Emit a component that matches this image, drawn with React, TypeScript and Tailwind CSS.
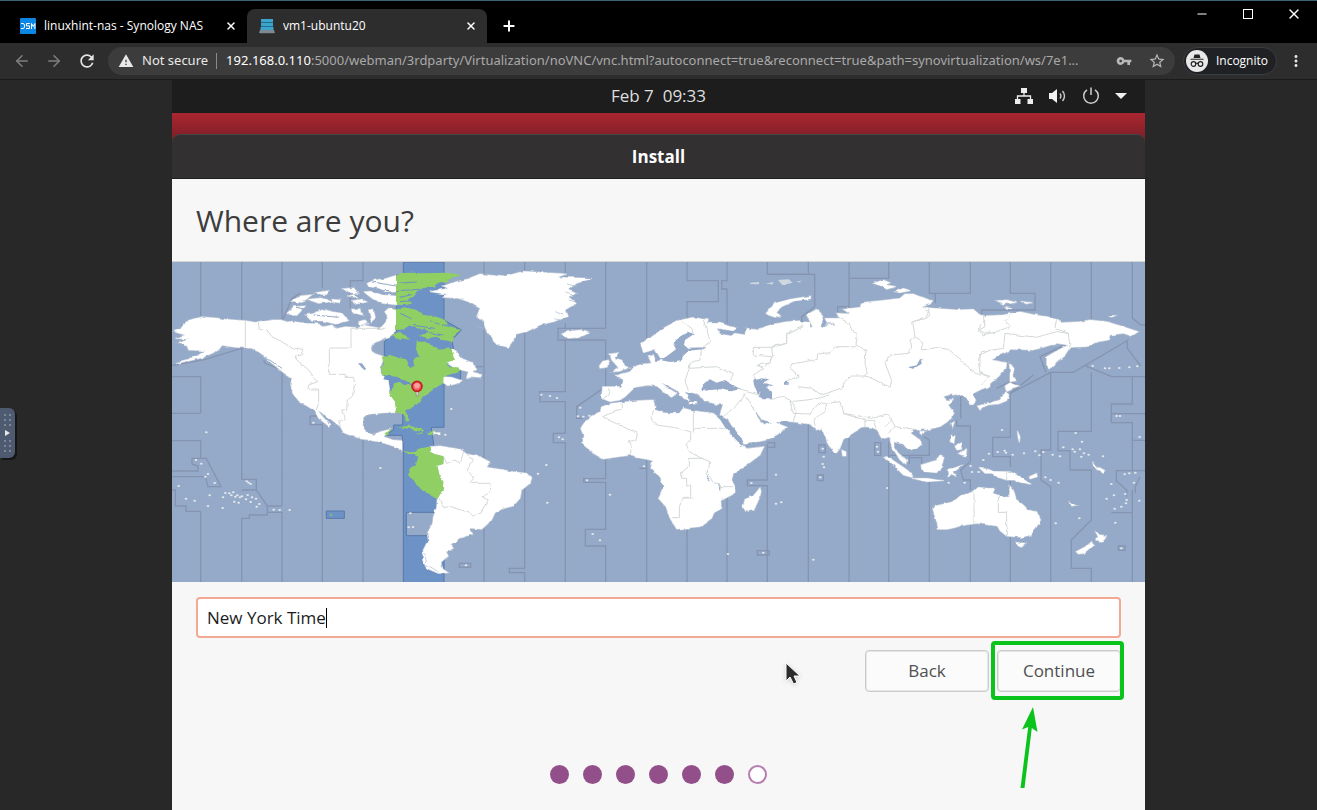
import type { ReactNode } from 'react';
import { ArrowLeft, ArrowRight, Plus, Minus, X } from 'lucide-react';
import { MdRefresh, MdWarning, MdVpnKey, MdStarBorder, MdMoreVert } from 'react-icons/md';

const uiFont = "font-['Open_Sans','Noto_Sans',sans-serif]";
const urlFont = "font-['Noto_Sans','Open_Sans',sans-serif]";

/* ---------- map data, drawn region by region ---------- */

const ZONE_LINES: [number, string][] = [
  [0, 'M86 6V185M86 350V460M86 542V595M86 755V968M0 350H86M0 460H86M0 542H86M0 633H78V618L60 612V595H103L147 680H108L100 650H0M0 690H10V738H42V754H86'],
  [0, 'M209 6V180M209 265V658H253V690L286 738H330M209 690H253M286 738V765H232V775H209V968M330 6V185L360 115L385 100M330 335V738M286 757H330V968M451 6V85M451 490V968M414 468H440M414 468V494H451M573 6V62H535V150M573 536V968'],
  [0, 'M0 317L100 298 215 263M275 300L280 310 355 340'],
  [624, 'M312 6V42M312 320H285M312 205V968M434 6V34M434 215V925H388V938H434V968M556 6V40M556 190V205H534V240H677M556 205H677V6M677 240V380M556 240V395H480V425H556V520H520V548H556V968M677 380L590 440V475H610M677 595V656H611V667H677V808H616V858H677V968M238 910H272V922H238Z'],
  [1164, 'M260 6V240M260 600V625H238M260 625V968M381 6V62H475V125H381V172M381 807V968M501 6V62H485V87H501V190M501 715V968M622 6V43H750M622 552V660H562V677H622V968M592 872H628V885H592ZM622 548H644V562H622'],
  [1704, 'M205 6V43M82 43H224V140L185 170V190M205 490V968M327 6V150M327 55H446V6M327 530V968M404 548H422V586H404ZM236 555H256V578H236ZM232 645H250V662H232ZM446 545V968M436 682H446M568 6V100H691V6M586 100V130M552 530L568 540V586H450M568 665V968M508 586V612M508 593H545V610M293 160V140H327M691 790V968'],
  [2214, 'M181 605V498H140V480M152 400V475M181 605L152 630 160 660H181V690M301 6V100H375V150H215V170M301 830V968M301 680V655M301 620V590H248V532H301V400L422 337M301 400L370 345M422 6V168M422 337V570H393V660L422 680V968M408 337L390 290 475 250M422 337H490L655 240M544 6V180M544 337V514H444V572H480V630H544V780L484 840V925H544V968'],
  [2214, 'M667 6V175L694 195H706M667 350V432H604V488H667V632H619V663L650 690V710M604 461H706M667 541H706M667 632H706M604 758H667V968M667 690V758M652 240V265L692 318M525 317L605 350H706M690 650L676 680V700M260 385L300 365 328 378M625 858H645V871H625Z'],
];

const LAND: [number, string][] = [
  // North America
  [0, 'M5 215L30 205 42 186 60 178 92 170 130 174 160 178 220 182 258 188 300 180 328 180 345 186 360 184 400 190 440 192 455 200 480 195 492 206 520 200 560 203 575 196 600 200 625 205 640 188 655 165 673 150V213L650 232 635 238 610 247 597 262 600 275 612 282 637 290 625 322 627 345 648 356 655 400 672 425 673 458 640 458 590 463 574 475 572 500 585 520 605 524 625 515 655 508 635 530 662 540 690 542 690 574 670 560 620 545 572 537 540 528 515 518 505 500 480 480 445 455 438 452 450 468 474 494 470 498 440 475 428 452 400 435 385 428 362 400 356 370 360 355 335 338 300 310 262 278 240 265 190 262 150 256 140 270 120 280 90 293 50 303 12 311 40 300 75 288 100 272 50 270 45 258 20 250 50 238 10 235 40 225Z'],
  [0, 'M345 160L365 140 400 138 390 150 375 166 350 166Z M358 124L385 108 420 104 400 120 375 130Z M405 118L450 114 480 125 440 130Z M430 98L470 92 460 104 440 102Z M400 165L430 160 450 146 480 155 510 160 530 182 490 192 450 182 420 184Z M515 86L545 84 560 100 535 98Z M480 118L505 120 500 128 482 126Z M540 122L570 118 585 126 555 132Z M535 148L560 146 575 165 545 160Z M585 70L610 60 640 56 673 46V92L640 95 620 84 590 80Z M575 95L600 94 630 105 673 108V134L630 130 600 115Z M590 150L605 148 610 175 598 185Z M560 185L580 180 590 192 565 195Z M638 155L650 145 673 150V185L655 180Z M525 108L545 104 555 112Z'],
  // Greenland, Iceland, maritime Canada
  [624, 'M150 95L205 85 190 78 225 66 260 58 300 42 370 50 430 34 500 38 560 42 530 52 636 55 590 70 562 90 590 100 565 110 588 130 555 150 562 170 520 185 480 195 440 215 408 222 400 240 385 262 355 255 335 235 320 215 310 185 290 170 300 145 265 125 235 115 190 112 200 102Z M545 222L560 215 600 210 625 220 600 232 565 235Z M195 305L215 290 215 268 230 275 245 295 275 308 290 325 280 335 305 345 300 355 260 352 265 335 225 325Z M190 350L215 352 245 362 235 370 205 377 190 368Z'],
  // South America
  [624, 'M150 560L180 558 240 568 260 582 300 590 330 606 320 622 360 628 400 635 440 640 455 655 450 670 425 690 420 715 400 738 370 745 345 758 335 780 305 808 270 804 278 822 250 832 235 835 230 845 215 850 218 868 198 875 205 888 190 900 180 910 185 925 205 938 175 940 140 925 128 900 130 870 145 840 142 820 158 790 160 770 170 745 172 715 188 690 190 665 178 645 172 615 190 612 190 588 165 583 150 575Z M160 518L180 518 180 524 162 524Z'],
  // Africa and Madagascar
  [1164, 'M62 505L75 485 95 468 120 455 125 440 155 430 230 422 280 420 285 440 280 448 310 458 330 460 358 460 370 445 400 452 460 460 475 472 495 500 520 530 550 555 560 566 612 560 600 585 560 615 520 640 515 660 525 680 525 700 482 722 485 745 462 758 455 775 420 800 350 807 330 775 318 740 295 715 310 680 300 650 272 625 278 602 260 598 245 595 215 585 165 592 130 597 100 580 65 550 70 525Z M600 683L605 700 582 750 558 755 549 740 555 718 580 708Z'],
  // Europe and the Middle East
  [1164, 'M242 250L270 235 310 205 350 183 400 172 445 180 440 190 480 190 530 205 520 212 470 205 480 222 510 228 525 220 555 225 558 205 590 210 600 205 640 192 690 185 750 190V492L680 483 640 488 605 478 590 458 586 462 600 482 615 495 640 485 682 502 650 525 620 540 555 553 530 520 505 480 480 465 490 430 460 430 430 422 415 402 400 398 375 396 388 420 372 416 355 395 330 380 302 366 320 382 350 400 335 412 290 378 262 376 225 382 195 410 180 420 150 425 125 415 128 380 185 380 190 360 165 348 210 335 225 318 250 312 275 310 265 290 280 284 288 305 305 300 285 268 250 278Z M150 282L175 278 165 295 185 300 195 318 210 322 178 334 155 335 175 322 155 300Z M118 318L128 304 145 300 150 312 140 322 120 325Z M310 396L332 396 330 408Z M388 427H410V432H388Z M458 428L476 424 470 433Z'],
  // Asia
  [1704, 'M110 195L140 185 180 182 205 205 218 200 200 165 230 148 248 165 245 205 258 200 265 188 290 200 280 188 260 185 255 175 300 175 290 160 330 162 310 148 360 142 365 128 440 120 480 115 495 102 520 102 545 112 578 122 572 132 545 140 580 145 650 150 700 148 720 165 750 170V380L730 385 700 400 705 425 690 432 680 410 668 402 640 408 635 400 610 410 620 420 640 418 625 435 642 460 630 480 600 500 565 508 545 505 540 514 525 506 512 520 540 540 545 555 515 572 500 565 490 552 470 548 462 545 462 560 475 580 500 600 498 612 480 600 468 580 455 560 448 530 425 538 412 510 395 502 370 500 345 515 310 538 300 565 290 578 280 575 262 545 245 505 230 510 205 488 160 485 110 483Z M78 160L105 130 150 118 212 108 212 116 160 124 125 140 108 156 122 168 105 172 85 165Z M400 70L430 60 450 68 440 74 468 80 440 88 425 78Z M465 95L490 85 512 92 480 98Z M305 570L318 575 318 588 308 588Z'],
  [1704, 'M430 592L450 595 490 622 515 640 515 652 490 645 460 615Z M515 655L560 655 610 662 560 665Z M543 615L575 605 600 588 612 592 605 620 590 638 555 635 545 628Z M622 628L640 625 668 615 650 630 640 635 652 650 634 642 625 652Z M632 525L645 528 642 550 630 545Z M655 580L680 570 678 588 665 585Z M635 490L643 485 638 502Z M538 515L555 512 548 524Z M645 555L665 545 668 568 650 570Z'],
  // Far East
  [2214, 'M60 145L130 150 190 150 200 165 220 168 280 165 330 155 375 165 440 175 455 188 510 185 540 180 590 185 640 200 685 215 665 228 640 220 600 225 595 240 560 246 530 260 480 262 465 285 440 305 420 328 410 310 410 290 445 270 475 255 440 250 400 262 370 270 310 268 270 285 245 300 290 308 288 325 265 350 235 375 205 385 170 400 100 400 60 400Z M162 402L185 400 197 420 192 432 180 434 172 412Z M298 308L312 325 308 350 318 362 300 365 300 340Z M285 378L300 368 327 378 305 385 290 392Z M288 395L297 405 290 422 265 432 230 435 210 450 202 438 240 430 270 420Z'],
  [2214, 'M210 625L235 628 250 634 300 635 320 645 340 658 364 673 335 668 310 660 290 660 265 652 245 640 225 640Z M358 650L380 640 382 650 362 656Z M260 122L290 120 320 128 280 132Z M332 124L368 128 350 132Z M285 142L308 146 290 148Z M595 168L622 166 605 171Z M322 512L330 530 328 548 324 530Z M548 605L560 620 584 632 580 638 560 628 550 615Z M478 726L500 736 485 738Z'],
  // Oceania
  [2214, 'M68 745L75 738 130 725 150 708 190 695 205 682 235 685 255 685 248 700 285 712 298 710 300 678 310 690 318 718 340 735 355 750 380 755 392 780 380 800 362 825 335 832 290 828 270 812 262 798 240 795 200 790 150 798 115 808 85 808 80 785Z M318 847L348 850 335 862 325 858Z M553 810L568 824 592 828 577 845 560 840 565 830Z M498 875L530 858 545 845 556 853 525 880 505 882Z'],
];

const SEAS: [number, string][] = [
  [0, 'M558 310L570 310 582 326 580 333 568 322Z'],
  [1164, 'M300 300L318 290 348 268 338 248 355 235 385 216 402 222 375 240 372 255 382 263 440 262 430 268 385 272 370 288 366 300 330 306Z'],
  [1164, 'M422 394L430 375 450 358 470 368 495 360 515 372 542 388 510 394 480 388 450 390Z'],
  [1164, 'M580 362L605 355 628 358 608 368 640 376 618 382 636 395 636 418 605 418 592 400 582 378Z'],
  [1164, 'M476 470L486 466 515 505 545 535 552 553 545 558 520 530 495 502Z'],
  [1164, 'M435 638L450 665 442 660ZM474 670L482 675 480 694Z'],
  [1704, 'M502 322L530 316 540 298 548 296 544 312 520 326ZM132 366H146V374H132Z'],
];

const BORDERS: [number, string][] = [
  [0, 'M220 182V262M258 188L262 205 285 210 300 230 320 240 350 258 360 265H392V285L370 288 375 300 410 330 425 350 437 365 410 375 408 387H440V430L433 450M641 205H537V264H472V343H520V352H545L548 370 542 405 526 420 524 448 512 450 520 478 512 484 500 482 505 500'],
  [624, 'M190 588L200 610 225 600 240 610 252 572M260 582L280 600 262 630 280 655 270 670H330L328 695 308 712 325 720 300 760 280 768 265 755 240 750 215 740 190 742 178 715'],
  [1164, 'M185 430L188 445 128 470 150 482 232 520 228 540 205 545 215 562 210 585M280 448L275 480 290 495 340 502 392 515V540L378 550 388 575 425 595M400 515V505H495M400 452V505M425 595H385V620L362 640V655H380V675H392V712H370L358 740V773H335M425 595L450 605 440 640 460 668 480 672V680H520M400 714H370'],
  [1164, 'M365 183L395 205 400 225M430 180L442 215 450 245 425 265 420 300 390 308 388 325 470 320 520 340 512 362M388 325L375 362 385 392M540 390L598 405 600 395M550 400L570 430 585 455M555 400L530 435 490 470M128 420L145 400 148 385M730 195L680 220V250L635 262H580V285L635 290 630 310 590 315 610 325 580 345 590 360M635 262L638 290 615 320M636 418L665 410 690 420 710 450 700 485'],
  [1704, 'M190 200L140 225V250L95 260M300 175L328 190 335 210 352 225 348 255 378 270 375 310 382 340 372 348 385 350 450 382 455 362 435 308 450 285 505 280 515 262 510 240 525 230 518 185 560 175 570 165 555 140M525 230L548 245V270L590 262 625 268 640 280 670 305 690 330 720 345M348 260H285L270 278 232 282V298L155 312 150 325 178 348 135 365M372 348H330L310 370V382L245 405 215 385 175 380M150 425L200 420 235 415 265 405M150 425L160 460 210 462 240 425 265 430M225 500L222 478 255 455 260 430 300 425 308 460 375 480V502M308 460L370 470 395 475 440 462 455 480 435 500M375 480L400 482 408 505M455 480L465 500 445 520M465 500L525 508M718 340L745 350M750 215L735 220 715 208 735 180M720 320V285L750 270'],
  [2214, 'M60 145L50 170 10 185M220 168L225 200 205 210 220 225 260 215 300 200 285 185 300 165M285 220L380 232 440 215 475 220 435 205 440 175M285 220L280 265 215 275 205 300 210 340 240 348 215 375M475 220L480 260M192 695V790M265 705V757H290V828M290 632V660'],
];

// [x, y] of atolls and islets, in map units
const ISLETS: [number, number][] = [
  [72, 600], [88, 611], [103, 517], [108, 642], [100, 650], [128, 669], [20, 678], [42, 716], [68, 722], [113, 706],
  [108, 738], [152, 744], [153, 712], [160, 699], [172, 700], [178, 706], [184, 697], [190, 710], [196, 706], [204, 712],
  [210, 709], [222, 718], [227, 705], [236, 726], [240, 712], [252, 716], [262, 732], [254, 740], [200, 728], [187, 725],
  [224, 664], [230, 668], [236, 672], [305, 749], [323, 750], [353, 750], [625, 624], [424, 488], [715, 760], [710, 802], [723, 801],
  [838, 447], [1108, 404], [1134, 408], [1155, 414], [1225, 443], [1218, 469], [1234, 470], [1252, 467], [1161, 532], [1172, 538],
  [1098, 641], [1123, 615], [1245, 661], [1314, 704], [1126, 728], [1262, 822], [1284, 841], [882, 916], [1416, 619], [820, 524],
  [1812, 644], [1738, 669], [1812, 731], [1828, 727], [1668, 882], [1774, 878], [1924, 899], [1945, 652], [1952, 566],
  [1955, 590], [1952, 612], [1956, 622], [2115, 560], [2118, 575], [2145, 684], [2490, 510], [2451, 581], [2477, 576],
  [2498, 572], [2502, 578], [2522, 584], [2556, 580], [2590, 574],
  [2602, 586], [2614, 576], [2642, 584], [2664, 589], [2674, 562], [2702, 568], [2711, 519], [2730, 545], [2708, 575],
  [2724, 568], [2728, 590], [2736, 580], [2750, 584], [2793, 589], [2651, 790], [2722, 775], [2799, 325], [2812, 325], [2842, 324],
  [2872, 322], [2896, 319], [2834, 468], [2844, 468], [2903, 531], [2818, 672], [2804, 716], [2826, 706], [2860, 702], [2864, 720],
  [2862, 730], [2848, 740], [2828, 746], [2902, 722], [2858, 643], [2872, 640], [2890, 638], [2886, 668], [2830, 788], [2848, 865],
  [2620, 652], [2636, 660], [2660, 668], [2762, 318], [2434, 600], [2396, 618], [2400, 636], [2420, 636], [2330, 668], [2378, 668],
];

const HIGHLIGHT =
  'M694 6H816V180L868 210 840 240 848 290 866 320V360L816 370V502H778L786 560H816V757H703V827H816V968H694V560L690 526H640L665 508V495H692V460L660 400 650 360H637V245L673 213V45H694ZM463 753H517V775H463Z';

const GREEN =
  'M48 50L60 40 90 38 130 40 200 38 243 44 215 56 200 64 175 68 160 80 130 84 110 96 96 112 82 118 97 130 80 135H48Z M48 148L75 142 110 150 130 165 165 168 195 180 200 195 243 210 225 222 218 245 190 240 170 230 140 235 118 226 150 218 135 208 110 205 85 195 75 208 48 210Z M35 225L60 215 75 228 92 234 60 240Z M5 290L30 285 60 295 80 298 90 325 102 318 100 300 118 290 108 270 110 245 140 245 160 258 180 272 205 262 215 270 225 300 200 308 205 322 235 322 242 335 215 342 190 352 190 370 165 385 145 400 128 410 122 425 100 440 78 452 82 470 90 482 80 485 68 460 48 458 45 425 30 405 38 365 60 360 40 350 5 345 5 320 12 315Z M52 502L90 497 132 510 128 516 90 506Z M148 515L160 514 158 525 140 520Z M106 520L125 520 125 525Z M14 520L35 508 20 528Z M68 572L90 577 105 576 120 565 150 560 150 575 165 583 192 588 190 612 172 618 180 650 190 665 188 690 172 718 150 705 125 690 100 660 82 645 90 625 108 612 115 590 105 582 85 582Z';

type LayerProps = { shapes: [number, string][]; className: string; fill?: string };

function Layer({ shapes, className, fill = 'currentColor' }: LayerProps) {
  return (
    <g className={className} fill={fill}>
      {shapes.map(([x, d]) => (
        <path key={d} d={d} transform={`translate(${x} 0)`} />
      ))}
    </g>
  );
}

function TimezoneMap() {
  return (
    <svg viewBox="0 6 2919 960" className="block h-auto w-full bg-[#95a9c8]" role="img" aria-label="Time zone map">
      <defs>
        <filter id="coast" x="0" y="0" width="100%" height="100%">
          <feTurbulence type="fractalNoise" baseFrequency="0.05" numOctaves="2" seed="4" result="noise" />
          <feDisplacementMap in="SourceGraphic" in2="noise" scale="9" xChannelSelector="R" yChannelSelector="G" />
        </filter>
      </defs>
      <path d={HIGHLIGHT} className="fill-[#6d92c6] stroke-[#5878a6]" strokeWidth="3" />
      <g strokeWidth="4">
        <Layer shapes={ZONE_LINES} className="stroke-[#8595b1]" fill="none" />
      </g>
      <g filter="url(#coast)">
        <rect x="0" y="6" width="2919" height="960" fill="none" />
        {/* coast outline goes below the fill, so regions join without a seam */}
        <g strokeWidth="4">
          <Layer shapes={LAND} className="stroke-[#c3ccd8]" fill="none" />
        </g>
        <Layer shapes={LAND} className="text-white" />
        <path d={GREEN} transform="translate(624 0)" className="fill-[#8fcf63]" />
        <path d="M15 348L50 350 90 368 97 376 70 374 60 365 42 370 38 392 30 385 35 362 10 358Z" transform="translate(624 0)" className="fill-[#6d92c6]" />
        <path d="M50 70L110 66M50 92L120 88M60 112L95 104M60 125L100 121M60 160L95 176M100 196L165 205M150 185L210 200M130 215L190 225" transform="translate(624 0)" className="stroke-[#6d92c6]" strokeWidth="3" fill="none" />
        <Layer shapes={SEAS} className="text-[#95a9c8]" />
        <path d="M600 66L672 78M596 88L650 92M372 142L420 150M425 165L500 172M255 275L330 325" className="stroke-[#95a9c8]" strokeWidth="3" fill="none" />
        {/* fjords */}
        <path
          d="M910 165L935 185M918 200L945 212M1180 95L1205 108M1190 120L1212 126M1150 155L1175 165M1185 72L1215 80M1146 176L1165 180M758 880L765 915 800 935"
          className="stroke-[#a9b8ce]"
          strokeWidth="2"
          fill="none"
        />
        <path d="M1732 68L1765 66 1760 73 1735 72ZM1782 70L1806 66 1800 74ZM1818 60L1850 58 1862 68 1830 74ZM1872 64L1890 62 1884 68Z" className="fill-[#cfd8df]" />
        <g strokeWidth="3">
          <Layer shapes={BORDERS} className="stroke-[#d3d9d7]" fill="none" />
        </g>
      </g>
      <g className="fill-[#e4e9ec]">
        {ISLETS.map(([x, y]) => (
          <ellipse key={`${x}-${y}`} cx={x} cy={y} rx="4" ry="3" />
        ))}
      </g>
      <circle cx="477" cy="765" r="4" className="fill-[#7fb97c]" />
      {/* location pin */}
      <path d="M731 390H740L738 408H733Z" className="fill-[#e6e0e0] stroke-[#8c7f86]" strokeWidth="2" />
      <circle cx="735" cy="379" r="15" className="fill-[#f06060] stroke-[#c22020]" strokeWidth="5" />
      <path d="M726 374Q735 364 744 374L741 385H729Z" className="fill-[#f9a0a0]" />
    </svg>
  );
}

/* ---------- browser chrome ---------- */

function DsmIcon() {
  return (
    <svg viewBox="0 0 16 16" className="size-4 shrink-0">
      <rect width="16" height="16" rx="1" fill="#0a86e4" />
      <path
        d="M1 5.500H3Q4.700 5.500 4.700 8T3 10.500H1M9.800 5.500H6.500V7.900H9.500V10.500H6M11.500 11V5.500L13.200 8.500L14.900 5.500V11"
        fill="none"
        stroke="#fff"
        strokeWidth="1"
      />
    </svg>
  );
}

function VmIcon() {
  return (
    <svg viewBox="0 0 16 16" className="size-4 shrink-0">
      <path d="M2 1H14V4H2ZM2 5H14V8H2ZM1.500 9H14.500V12H1.500Z" fill="#3da5cc" />
      <path d="M2 4H14V5H2ZM2 8H14V9H2Z" fill="#1f6f92" />
      <path d="M1 12H15L16 15H0Z" fill="#7d8890" />
      <path d="M1 15H15V16H1Z" fill="#3c4248" />
    </svg>
  );
}

function TabTitle({ icon, title }: { icon: ReactNode; title: string }) {
  return (
    <>
      {icon}
      <span className="flex-1 truncate">{title}</span>
      <button type="button" aria-label={`Close ${title}`} className="grid size-4 place-items-center">
        <X className="size-3" strokeWidth={3} />
      </button>
    </>
  );
}

function TabStrip() {
  return (
    <header className="flex h-[43px] items-end border-t border-[#3c6473] bg-black text-white">
      <div className="flex h-[34px] w-[247px] items-center gap-2 pr-2 pl-5 text-xs">
        <TabTitle icon={<DsmIcon />} title="linuxhint-nas - Synology NAS" />
      </div>
      <div className="flex h-[34px] w-60 items-center gap-2 rounded-t-lg bg-[#2d2d2d] pr-2 pl-3 text-xs">
        <TabTitle icon={<VmIcon />} title="vm1-ubuntu20" />
      </div>
      <button type="button" aria-label="New tab" className="mb-[7px] ml-3 grid size-5 place-items-center">
        <Plus className="size-4" strokeWidth={3} />
      </button>
      <div className="mb-4 ml-auto flex self-center">
        <button type="button" aria-label="Minimize" className="grid w-[46px] place-items-center">
          <Minus className="size-3.5" strokeWidth={2} />
        </button>
        <button type="button" aria-label="Maximize" className="grid w-[46px] place-items-center">
          <svg viewBox="0 0 10 10" className="size-2.5" fill="none" stroke="currentColor">
            <rect x="0.500" y="0.500" width="9" height="9" />
          </svg>
        </button>
        <button type="button" aria-label="Close" className="grid w-[46px] place-items-center">
          <X className="size-4" strokeWidth={2} />
        </button>
      </div>
    </header>
  );
}

function IncognitoIcon() {
  return (
    <svg viewBox="0 0 22 22" className="size-[22px]">
      <circle cx="11" cy="11" r="11" fill="#e8e8e8" />
      <path d="M7.500 8L8.500 4.500H13.500L14.500 8ZM4.500 8.800H17.500V9.800H4.500Z" fill="#222" />
      <g fill="none" stroke="#222" strokeWidth="1.200">
        <circle cx="7.500" cy="14" r="2.300" />
        <circle cx="14.500" cy="14" r="2.300" />
        <path d="M9.800 13.600Q11 12.800 12.200 13.600" />
      </g>
    </svg>
  );
}

function Toolbar() {
  return (
    <nav className="flex h-[37px] items-center border-b border-[#1b1b1b] bg-[#2d2d2d] pr-3">
      <div className="flex w-[108px] shrink-0 items-center gap-[14px] pl-[13px]">
        <button type="button" aria-label="Back" className="text-[#7f7f7f]">
          <ArrowLeft className="size-[18px]" strokeWidth={2} />
        </button>
        <button type="button" aria-label="Forward" className="text-[#7f7f7f]">
          <ArrowRight className="size-[18px]" strokeWidth={2} />
        </button>
        <button type="button" aria-label="Reload" className="text-[#e4e4e4]">
          <MdRefresh className="size-5" />
        </button>
      </div>
      <div className={`flex h-7 min-w-0 flex-1 items-center rounded-full bg-[#3c3c3c] pr-[9px] pl-2.5 text-[13px] ${urlFont}`}>
        <MdWarning className="size-4 shrink-0 text-[#e8e8e8]" />
        <span className="ml-2 shrink-0 text-[#e8e8e8]">Not secure</span>
        <span className="mr-[9px] ml-2 h-4 w-px shrink-0 bg-[#8a8a8a]" />
        <span className="min-w-0 flex-1 truncate text-[#a9a9a9]">
          <span className="text-white">192.168.0.110</span>
          :5000/webman/3rdparty/Virtualization/noVNC/vnc.html?autoconnect=true&amp;reconnect=true&amp;path=synovirtualization/ws/7e1...
        </span>
        <button type="button" aria-label="Saved passwords" className="ml-3 text-[#b9b9b9]">
          <MdVpnKey className="size-4" />
        </button>
        <button type="button" aria-label="Bookmark this tab" className="ml-4 text-[#b9b9b9]">
          <MdStarBorder className="size-[18px]" />
        </button>
      </div>
      <div className="ml-2 flex h-7 shrink-0 items-center gap-2 rounded-full border border-[#3a3d40] bg-[#202124] pr-2 pl-0.5 text-xs text-white">
        <IncognitoIcon />
        Incognito
      </div>
      <button type="button" aria-label="Menu" className="ml-2.5 text-[#e4e4e4]">
        <MdMoreVert className="size-[18px]" />
      </button>
    </nav>
  );
}

/* ---------- guest desktop ---------- */

function SystemTray() {
  return (
    <div className="flex items-center gap-[15px]">
      <svg viewBox="0 0 20 18" className="h-[18px] w-5" fill="#ececec">
        <path d="M7 1H13V6H7ZM1 12H6.500V17H1ZM13.500 12H19V17H13.500Z" />
        <path d="M10 6V9M3.500 12V9H16.500V12" fill="none" stroke="#ececec" strokeWidth="1.300" />
      </svg>
      <svg viewBox="0 0 18 18" className="size-[18px]" fill="none" stroke="#c9c9c9" strokeWidth="1.400">
        <path d="M0 6H3L8 2V16L3 12H0Z" fill="#f1f1f1" stroke="none" />
        <path d="M11 6.500Q12.800 9 11 11.500M13.500 4Q17.500 9 13.500 14" />
      </svg>
      <svg viewBox="0 0 18 18" className="size-[18px]" fill="none" stroke="#cfcfcf" strokeWidth="1.500">
        <path d="M5 2.800A7.300 7.300 0 1 0 13 2.800M9 0.500V8" />
      </svg>
      <svg viewBox="0 0 12 6" className="h-1.5 w-3" fill="#f1f1f1">
        <path d="M0 0H12L6 6Z" />
      </svg>
    </div>
  );
}

function StepDots({ done, total }: { done: number; total: number }) {
  return (
    <ol className="mt-[73px] flex justify-center gap-[14px] pb-7">
      {Array.from({ length: total }, (_, i) => (
        <li
          key={i}
          className={i < done ? 'size-[19px] rounded-full bg-[#924f8a]' : 'size-[19px] rounded-full border-2 border-[#b67db0] bg-white'}
        />
      ))}
    </ol>
  );
}

function DialogButton({ children }: { children: ReactNode }) {
  return (
    <button
      type="button"
      className="h-[42px] w-[124px] rounded border border-[#cbcbcb] bg-[#fbfbfb] text-[17px] font-medium text-[#505050] ring-1 ring-[#e6e6e6] ring-inset"
    >
      {children}
    </button>
  );
}

function Installer() {
  return (
    <section className="flex flex-1 flex-col bg-[#f7f7f7] text-[#3d3d3d]">
      <div className="bg-linear-to-b from-[#a8262f] from-35% to-[#7d1e28] to-60%">
        <div className="grid h-[33px] grid-cols-[1fr_auto_1fr] items-center bg-[#1d1d1d] pb-0.5 text-[#dfdfdf]">
          <time className="col-start-2 text-[17px] whitespace-pre">Feb 7  09:33</time>
          <div className="flex justify-end pr-[18px]">
            <SystemTray />
          </div>
        </div>
        <h1 className="mt-[21px] grid h-[45px] place-items-center rounded-t-lg border-t border-b border-t-[#474445] border-b-[#1f1d1e] bg-[#333031] text-[17px] font-bold text-white">
          Install
        </h1>
      </div>
      <h2 className="flex h-[83px] items-center border-b border-[#d5d5d5] px-6 text-[30px]">Where are you?</h2>
      <TimezoneMap />
      <div className="px-6 pt-[15px]">
        <label className="flex h-[41px] items-center rounded border-2 border-[#f3a993] bg-white px-[9px] text-[17px] font-medium text-[#1c1c1c]">
          <input
            aria-label="Location"
            defaultValue="New York Time"
            className="[field-sizing:content] min-w-0 outline-none"
          />
          <span className="h-5 w-px bg-black" />
        </label>
        <div className="relative mt-3 flex justify-end gap-2">
          <svg viewBox="0 0 16 24" className="absolute top-3 right-[320px] h-6 w-4 drop-shadow-sm">
            <path d="M1 1V19L5 15L8.500 22L12 20.500L9 14H15Z" fill="#2c2c2c" stroke="#fff" strokeWidth="1" />
          </svg>
          <DialogButton>Back</DialogButton>
          <div className="relative">
            <DialogButton>Continue</DialogButton>
            <span className="pointer-events-none absolute -top-[9px] -right-[3px] -bottom-2 -left-1.5 rounded border-4 border-[#0ac41c]" />
            <svg viewBox="0 0 20 84" className="pointer-events-none absolute top-14 left-[22px] h-[84px] w-5" fill="#0ac41c">
              <path d="M14 1L18.500 26L12.800 22L5.500 82H1.500L9.200 21L3 23.500Z" />
            </svg>
          </div>
        </div>
        <StepDots done={6} total={7} />
      </div>
    </section>
  );
}

export default function App() {
  return (
    <div className={`flex min-h-screen flex-col bg-[#282828] ${uiFont}`}>
      <TabStrip />
      <Toolbar />
      <main className="relative flex flex-1 flex-col px-[172px]">
        {/* noVNC control bar handle */}
        <button
          type="button"
          aria-label="Open control bar"
          className="absolute top-[328px] left-0 flex h-[50px] w-[15px] items-center rounded-r-md bg-[#4d5a70] shadow-[2px_2px_0_#161616]"
        >
          <svg viewBox="0 0 15 50" className="h-[50px] w-[15px]" fill="#7c8798">
            {[6, 11, 16, 32, 37, 42].map((y) => (
              <path key={y} d={`M4 ${y}h2v2h-2zM9 ${y}h2v2h-2z`} />
            ))}
            <path d="M5 22L10 25L5 28Z" fill="#e8e8e8" />
          </svg>
        </button>
        <Installer />
      </main>
    </div>
  );
}
